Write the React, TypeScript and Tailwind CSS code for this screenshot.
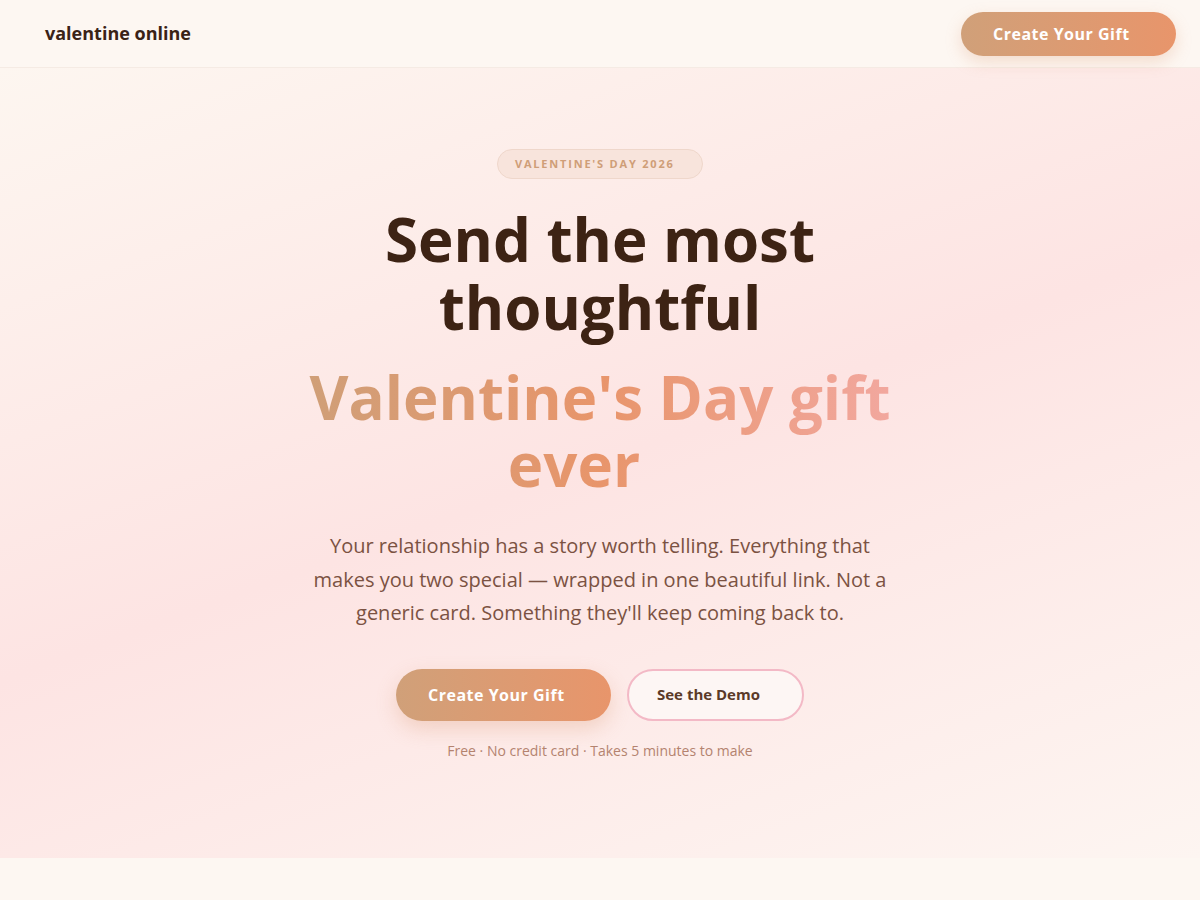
import React from 'react';

const font = { fontFamily: '"Open Sans", "Noto Sans", sans-serif' };

export default function App() {
  return (
    <div className="min-h-[900px] bg-[#fdf7f2] text-[#3d2314]" style={font}>
      <header className="h-[68px] flex items-center justify-between pl-[45px] pr-[24px] border-b border-[#f5ebe4] bg-[#fdf7f2]">
        <span className="text-[18px] font-bold text-[#3a2216]">valentine online</span>
        <button className="h-[44px] w-[215px] pl-[32px] text-left rounded-full bg-gradient-to-r from-[#d0a079] to-[#e8956b] text-white text-[16px] font-bold tracking-[0.5px] shadow-[0_6px_16px_rgba(220,150,110,0.28)]">
          Create Your Gift
        </button>
      </header>

      <section className="bg-[linear-gradient(160deg,#fdf6f0_0%,#fde4e3_50%,#fdf5f1_100%)] pt-[81px] pb-[97px] flex flex-col items-center text-center">
        <div className="h-[30px] w-[206px] pl-[17px] rounded-full border border-[#efd7cb] bg-[#f8e4dc] flex items-center text-[11px] font-bold tracking-[1.8px] text-[#cf9e78]">
          VALENTINE'S DAY 2026
        </div>

        <h1 className="mt-[26px] text-[60px] leading-[68px] font-bold text-[#3d2314] max-w-[620px]">
          Send the most thoughtful
        </h1>
        <div className="mt-[23px] w-[600px] text-[60px] leading-[67px] font-bold bg-[linear-gradient(90deg,#cf9f78_0%,#e8956b_50%,#f2a8a0_100%)] bg-clip-text text-transparent">
          Valentine's Day gift <span className="pr-[52px]">ever</span>
        </div>

        <p className="mt-[31px] max-w-[580px] text-[20px] leading-[33.5px] text-[#7b5242]">
          Your relationship has a story worth telling. Everything that makes you two special — wrapped in one beautiful link. Not a generic card. Something they'll keep coming back to.
        </p>

        <div className="mt-[39px] flex items-center gap-[16px]">
          <button className="h-[52px] w-[215px] pl-[32px] text-left rounded-full bg-gradient-to-r from-[#d0a079] to-[#e8956b] text-white text-[16px] font-bold tracking-[0.5px] shadow-[0_8px_20px_rgba(220,150,110,0.3)]">
            Create Your Gift
          </button>
          <button className="h-[52px] w-[177px] pl-[28px] text-left rounded-full border-2 border-[#f3b9c6] bg-[#fdf6f4] text-[#5b3a28] text-[15px] font-bold">
            See the Demo
          </button>
        </div>

        <p className="mt-[19px] text-[14px] text-[#b4836f]">
          Free · No credit card · Takes 5 minutes to make
        </p>
      </section>
    </div>
  );
}
